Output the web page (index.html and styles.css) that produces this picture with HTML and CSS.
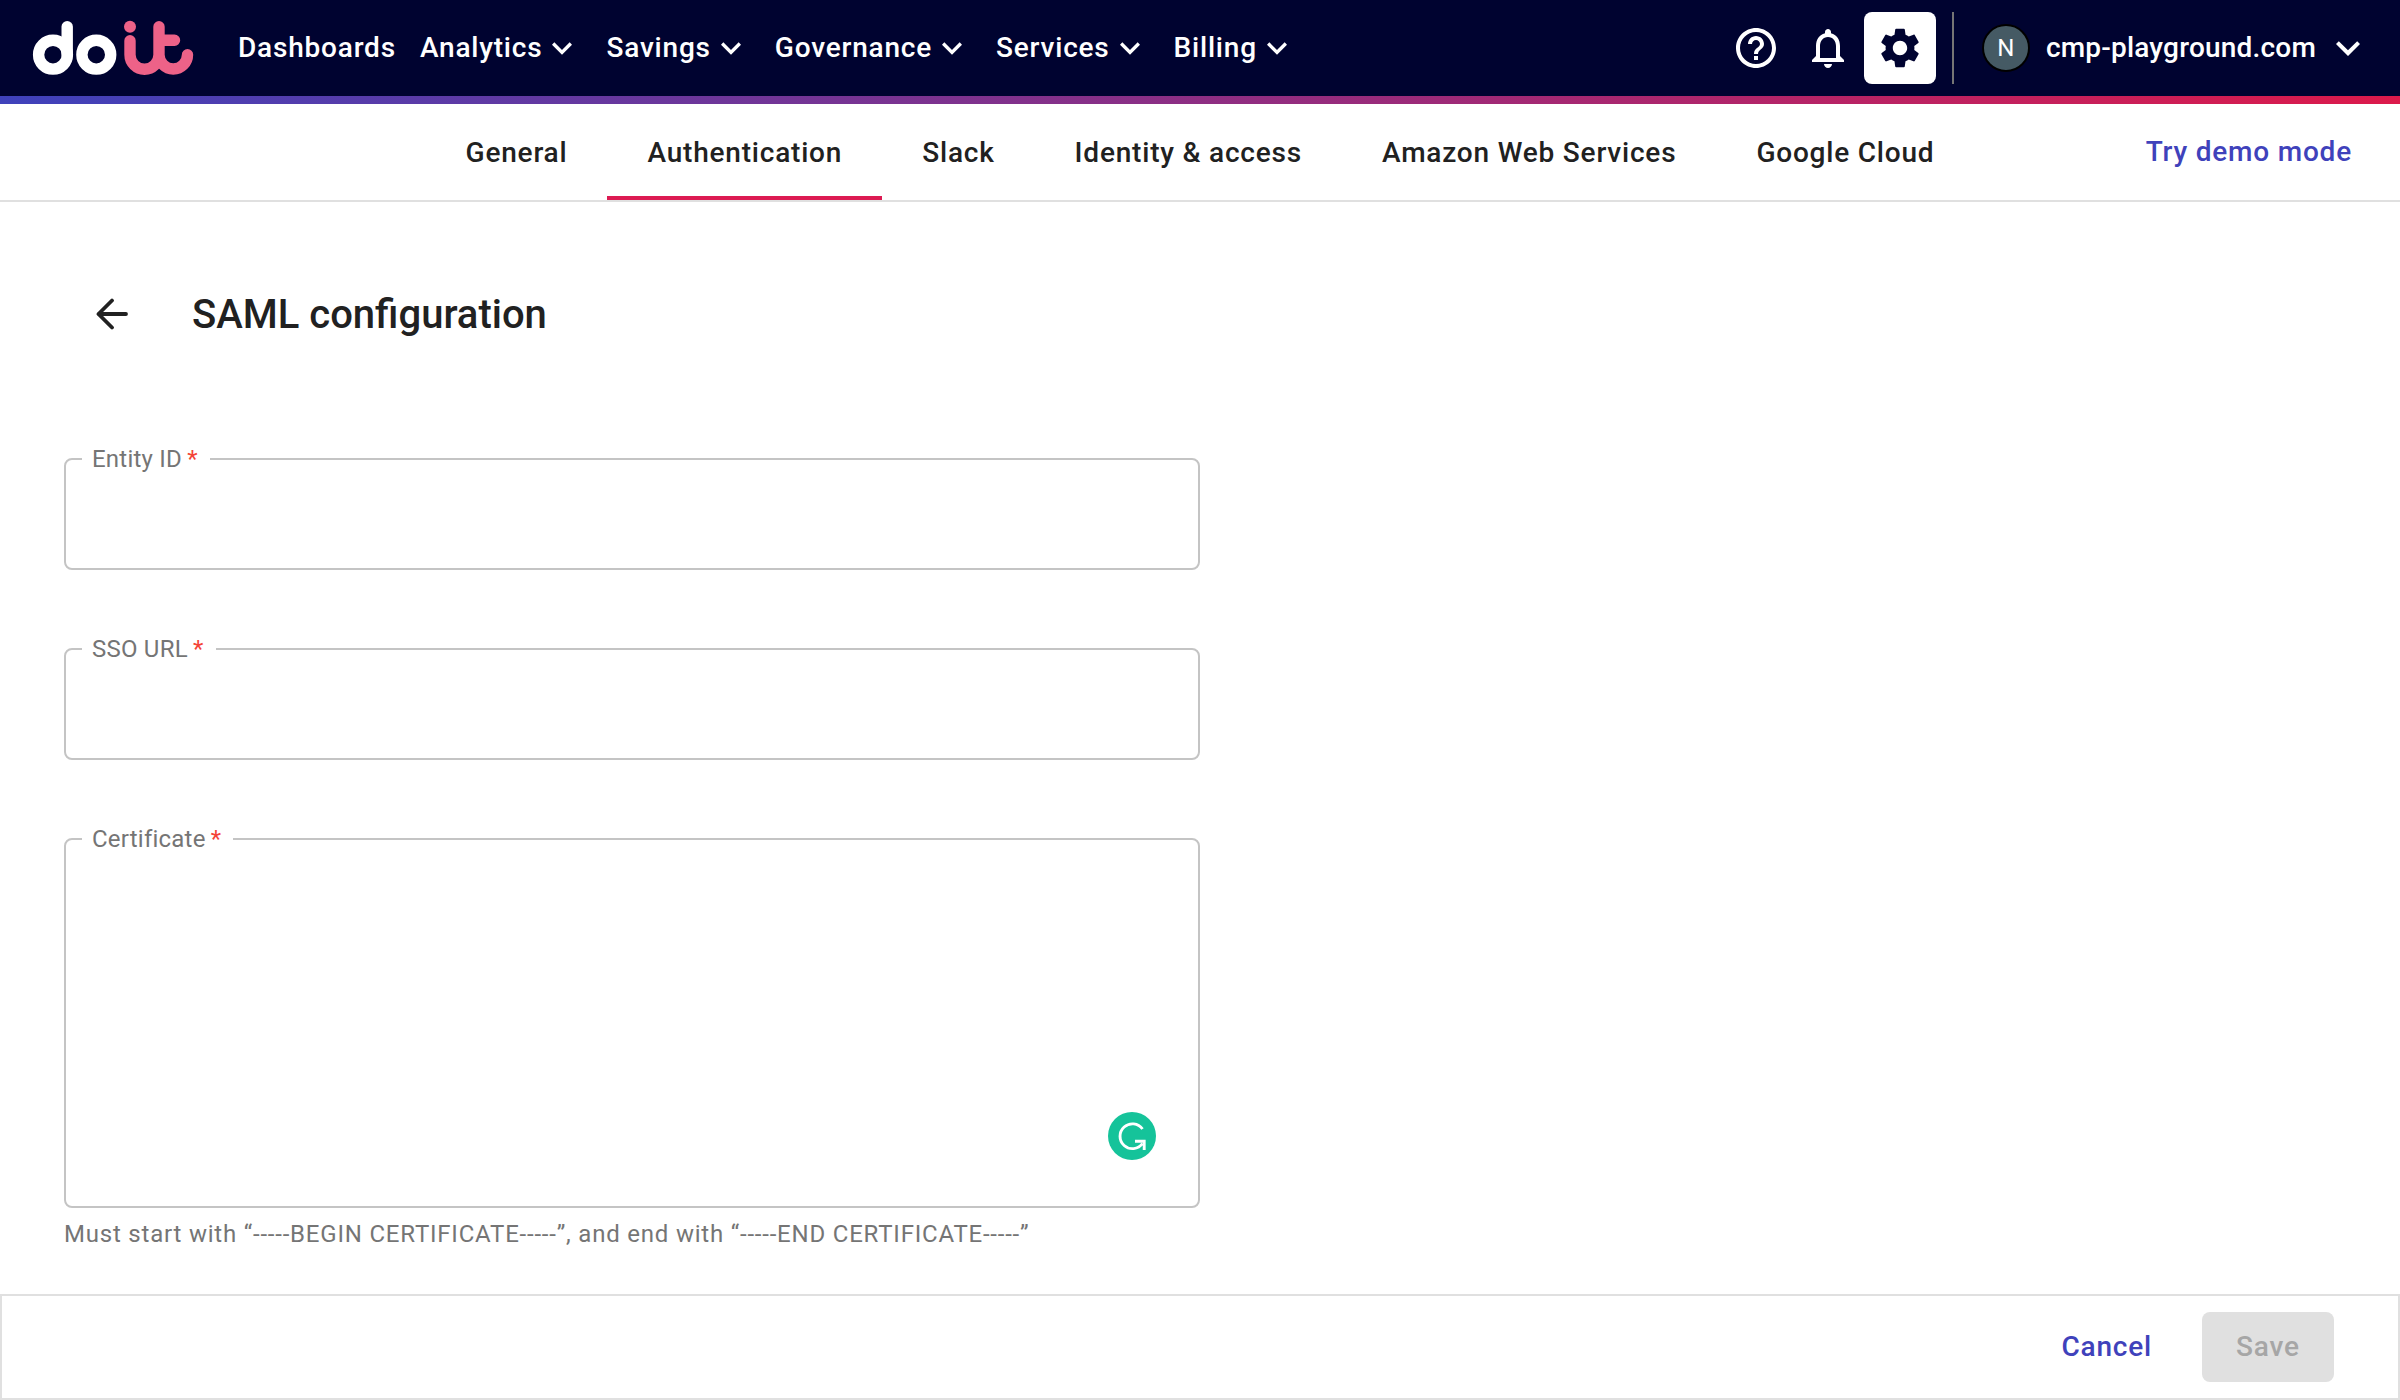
FILE: index.html
```html
<!DOCTYPE html>
<html lang="en">
<head>
<meta charset="utf-8">
<title>SAML configuration</title>
<link rel="stylesheet" href="styles.css">
</head>
<body>
<svg class="sprite" width="0" height="0">
  <symbol id="chevron" viewBox="0 0 24 24"><path d="M7.41 8.59 12 13.17l4.59-4.58L18 10l-6 6-6-6z"/></symbol>
</svg>
<header class="topbar">
  <svg class="logo" viewBox="0 2 162 56" fill="none" stroke-width="11.4" stroke-linecap="round">
    <g stroke="#fff"><circle cx="21" cy="36.7" r="14.4"/><path d="M35.2 8.700v28"/><circle cx="64.300" cy="36.700" r="14.400"/></g>
    <g stroke="#ed6288"><path d="M98 22.700v14a14.500 14.500 0 0 0 29 0V8.700M127 36.700a14.250 14.250 0 0 0 28.500 0M127 22.300h15.500"/></g>
    <circle cx="98" cy="8.700" r="6" fill="#ed6288"/>
  </svg>
  <nav class="menu">
    <a>Dashboards</a>
    <a>Analytics<svg><use href="#chevron"/></svg></a>
    <a>Savings<svg><use href="#chevron"/></svg></a>
    <a>Governance<svg><use href="#chevron"/></svg></a>
    <a>Services<svg><use href="#chevron"/></svg></a>
    <a>Billing<svg><use href="#chevron"/></svg></a>
  </nav>
  <div class="tools">
    <span class="tool"><svg viewBox="0 0 24 24"><path d="M11 18h2v-2h-2v2zm1-16C6.480 2 2 6.480 2 12s4.480 10 10 10 10-4.480 10-10S17.520 2 12 2zm0 18c-4.410 0-8-3.590-8-8s3.590-8 8-8 8 3.590 8 8-3.590 8-8 8zm0-14c-2.210 0-4 1.790-4 4h2c0-1.100.9-2 2-2s2 .9 2 2c0 2-3 1.750-3 5h2c0-2.250 3-2.500 3-5 0-2.210-1.790-4-4-4z"/></svg></span>
    <span class="tool"><svg viewBox="0 0 24 24"><path d="M12 22c1.100 0 2-.9 2-2h-4c0 1.100.9 2 2 2zm6-6v-5c0-3.070-1.630-5.640-4.500-6.320V4c0-.83-.67-1.500-1.500-1.500s-1.500.67-1.500 1.500v.68C7.640 5.360 6 7.920 6 11v5l-2 2v1h16v-1l-2-2zm-2 1H8v-6c0-2.480 1.510-4.500 4-4.500s4 2.020 4 4.500v6z"/></svg></span>
    <span class="tool active"><svg viewBox="0 0 24 24"><path d="M19.140 12.940c.04-.3.060-.61.060-.94 0-.32-.02-.64-.07-.94l2.030-1.580c.18-.14.230-.41.120-.61l-1.920-3.320c-.12-.22-.37-.29-.59-.22l-2.390.96c-.5-.38-1.030-.7-1.620-.94l-.36-2.540c-.04-.24-.24-.41-.48-.41h-3.840c-.24 0-.43.17-.47.41l-.36 2.540c-.59.24-1.130.57-1.620.94l-2.390-.96c-.22-.08-.47 0-.59.22L2.740 8.870c-.12.21-.08.47.12.61l2.030 1.580c-.05.3-.09.63-.09.94s.02.64.07.94l-2.030 1.580c-.18.14-.23.41-.12.61l1.920 3.320c.12.22.37.29.59.22l2.390-.96c.5.38 1.030.7 1.620.94l.36 2.540c.05.24.24.41.48.41h3.840c.24 0 .44-.17.47-.41l.36-2.540c.59-.24 1.130-.56 1.620-.94l2.390.96c.22.08.47 0 .59-.22l1.920-3.320c.12-.22.070-.47-.12-.61l-2.010-1.580zM12 15.600c-1.980 0-3.600-1.620-3.600-3.600s1.620-3.600 3.600-3.600 3.600 1.620 3.600 3.600-1.620 3.600-3.600 3.600z"/></svg></span>
  </div>
  <div class="account">
    <span class="avatar">N</span>
    <span class="domain">cmp-playground.com</span>
    <svg><use href="#chevron"/></svg>
  </div>
</header>
<div class="stripe"></div>
<div class="tabbar">
  <nav class="tabs">
    <a>General</a>
    <a class="selected">Authentication</a>
    <a>Slack</a>
    <a>Identity &amp; access</a>
    <a>Amazon Web Services</a>
    <a>Google Cloud</a>
  </nav>
  <a class="demo">Try demo mode</a>
</div>
<main class="content">
  <div class="heading">
    <svg class="back" viewBox="0 0 32 32"><path d="M30 16H2.500M16 2.500 2.500 16 16 29.500"/></svg>
    <h1>SAML configuration</h1>
  </div>
  <fieldset class="field"><legend>Entity ID<span>&thinsp;*</span></legend></fieldset>
  <fieldset class="field"><legend>SSO URL<span>&thinsp;*</span></legend></fieldset>
  <fieldset class="field tall">
    <legend>Certificate<span>&thinsp;*</span></legend>
    <svg class="assistant" viewBox="0 0 48 48"><circle cx="24" cy="24" r="24" fill="#15c39a"/><path d="M34.500 17A12.400 12.400 0 1 0 34.500 31.500M27 29.300h9.200v8.700" fill="none" stroke="#fff" stroke-width="2.900"/></svg>
  </fieldset>
  <p class="hint">Must start with “-----BEGIN CERTIFICATE-----”, and end with “-----END CERTIFICATE-----”</p>
</main>
<footer class="actions">
  <button class="cancel">Cancel</button>
  <button class="save" disabled>Save</button>
</footer>
</body>
</html>
```
FILE: styles.css
```css
* { box-sizing: border-box; }
body {
  margin: 0;
  height: 1400px;
  display: flex;
  flex-direction: column;
  overflow: hidden;
  background: #fff;
  color: #212121;
  font: 500 28px/48px Roboto, sans-serif;
}
.sprite { position: absolute; }
.topbar {
  height: 96px;
  flex: none;
  display: flex;
  align-items: center;
  padding: 0 28px 0 32px;
  background: #000330;
  color: #fff;
}
.topbar svg { fill: currentColor; }
.topbar .logo { width: 162px; height: 56px; fill: none; }
.menu { display: flex; margin-left: 32px; letter-spacing: 0.8px; }
.menu a { display: flex; align-items: center; padding: 0 12px; }
.menu svg { width: 40px; height: 40px; }
.tools { display: flex; margin-left: auto; height: 72px; padding-right: 16px; border-right: 2px solid #757575; }
.tool { width: 72px; height: 72px; display: flex; align-items: center; justify-content: center; border-radius: 8px; }
.tool svg { width: 48px; height: 48px; }
.tool.active { background: #fff; color: #000330; }
.account { display: flex; align-items: center; padding-left: 28px; }
.avatar {
  width: 48px;
  height: 48px;
  border: 2px solid #000;
  border-radius: 50%;
  background: #455a64;
  color: #fff;
  font-size: 24px;
  font-weight: 400;
  line-height: 45px;
  text-align: center;
}
.domain { margin-left: 16px; letter-spacing: 0.2px; }
.account svg { width: 48px; height: 48px; margin-left: 8px; }
.stripe { height: 8px; flex: none; background: linear-gradient(90deg, #3f42bb, #dc1a4b); }
.tabbar { height: 98px; flex: none; display: grid; grid-template-columns: 1fr auto 1fr; border-bottom: 2px solid #e0e0e0; letter-spacing: 0.8px; }
.tabs { grid-column: 2; display: flex; }
.tabs a { padding: 25px 40px 19px; border-bottom: 4px solid transparent; }
.tabs .selected { border-color: #dc1a52; }
.demo { justify-self: end; align-self: center; margin-right: 48px; color: #3f42bb; }
.content { flex: 1; padding: 88px 64px 0; }
.heading { display: flex; align-items: center; gap: 64px; height: 48px; padding-left: 32px; margin-bottom: 110px; }
.back { width: 32px; height: 32px; fill: none; stroke: #212121; stroke-width: 3.800; stroke-linecap: round; stroke-linejoin: round; }
h1 { margin: 0; padding-top: 2px; font-size: 40px; font-weight: 500; }
.field {
  width: 1136px;
  height: 122px;
  margin: 0 0 68px;
  padding: 0 16px;
  border: 2px solid #c4c4c4;
  border-radius: 8px;
}
.field legend { padding: 0 12px 0 10px; color: #757575; font-size: 24px; font-weight: 400; line-height: 22px; letter-spacing: 0.225px; }
.field legend span { color: #f44336; }
.field.tall { display: flex; height: 380px; margin-bottom: 0; }
.assistant { display: block; width: 48px; height: 48px; margin: 262px 26px 0 auto; }
.hint { margin: 6px 0 0; color: #757575; font-size: 24px; font-weight: 400; line-height: 40px; letter-spacing: 0.79px; }
.actions {
  height: 106px;
  flex: none;
  display: flex;
  align-items: center;
  justify-content: flex-end;
  gap: 34px;
  padding-right: 64px;
  border: 2px solid #e0e0e0;
}
.actions button { height: 70px; border: 0; border-radius: 8px; font: inherit; letter-spacing: 0.8px; }
.cancel { padding: 0 16px; background: none; color: #3f42bb; }
.save { width: 132px; background: #e0e0e0; color: #a6a6a6; }
```
